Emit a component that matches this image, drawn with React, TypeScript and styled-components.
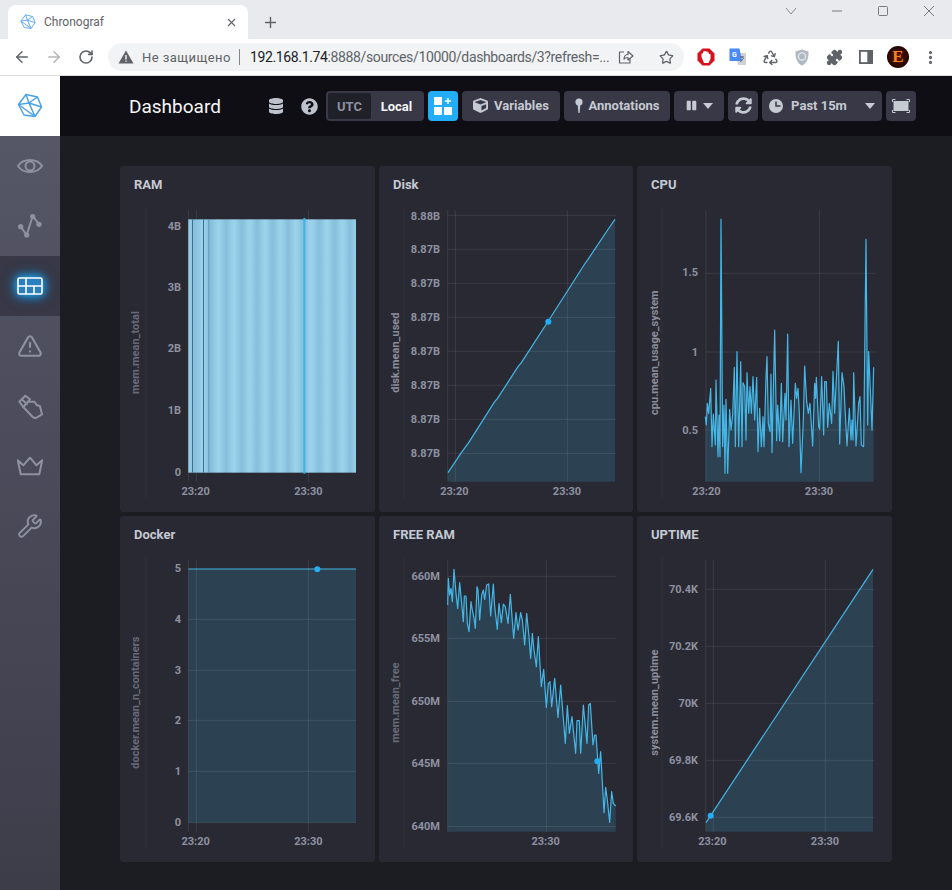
import React from 'react';
import styled, { createGlobalStyle } from 'styled-components';
import { ArrowLeft, ArrowRight, EllipsisVertical, Plus, Puzzle, Recycle, RotateCw, Star, TriangleAlert, Wrench, X } from 'lucide-react';
import { FaCube, FaDatabase, FaPause, FaQuestionCircle, FaSyncAlt } from 'react-icons/fa';

const GlobalStyle = createGlobalStyle`
  html, body { margin: 0; padding: 0; background: #1c1c23; }
  * { box-sizing: border-box; }
  body { font-family: Roboto, "Liberation Sans", sans-serif; }
`;

type Tick = { label: string; y: number };

interface ChartProps {
  id: string;
  title: string;
  yLabel: string;
  labelX: number;
  dim?: boolean;
  originX: number;
  left: number;
  right: number;
  top: number;
  bottom: number;
  anchor: number;
  hGrid: number[];
  vGrid: number[];
  yTicks: Tick[];
  xTicks: { label: string; x: number }[];
  series?: number[][];
  dot?: number[];
  children?: React.ReactNode;
}

// all chart coordinates are in 3x units, svg is scaled down to 255 wide
const cpuSeries = [
  [208, 770], [211, 795], [214, 730], [218, 760], [224, 685], [228, 860], [232, 762], [238, 855], [240, 660],
  [246, 890], [249, 765], [252, 890], [255, 178], [260, 860], [264, 735], [267, 940], [270, 718], [275, 940],
  [281, 748], [285, 810], [290, 765], [295, 622], [298, 860], [303, 575], [308, 860], [314, 605], [318, 860],
  [321, 668], [326, 680], [330, 840], [333, 638], [338, 760], [342, 680], [346, 760], [351, 650], [356, 780],
  [362, 652], [366, 875], [371, 745], [376, 860], [381, 770], [384, 860], [390, 650], [393, 590], [397, 790],
  [402, 815], [405, 642], [408, 878], [416, 510], [422, 842], [425, 735], [431, 842], [436, 670], [440, 845],
  [443, 782], [447, 700], [450, 780], [455, 522], [459, 860], [465, 720], [470, 850], [478, 670], [482, 715],
  [486, 685], [490, 760], [495, 938], [502, 780], [506, 618], [512, 725], [517, 760], [522, 730], [530, 858],
  [536, 670], [539, 715], [541, 652], [548, 800], [551, 808], [557, 650], [563, 825], [566, 665], [571, 665],
  [575, 802], [580, 730], [587, 790], [591, 634], [596, 760], [602, 640], [607, 544], [611, 852], [618, 638],
  [624, 680], [628, 765], [633, 858], [640, 745], [645, 840], [648, 780], [651, 840], [653, 638], [660, 858],
  [668, 730], [672, 710], [676, 855], [683, 860], [690, 238], [695, 795], [698, 575], [703, 690], [708, 810],
  [713, 622],
];

const freeRamSeries = [
  [209, 285], [211, 205], [215, 255], [219, 235], [223, 275], [228, 178], [234, 250], [239, 295], [245, 218],
  [251, 280], [256, 335], [259, 258], [264, 258], [268, 340], [273, 365], [279, 275], [283, 300], [288, 325],
  [292, 355], [297, 230], [300, 240], [305, 330], [311, 255], [316, 240], [320, 268], [326, 225], [332, 222],
  [338, 318], [346, 222], [350, 290], [358, 358], [363, 280], [370, 338], [376, 282], [382, 290], [390, 340],
  [397, 253], [407, 385], [414, 308], [420, 360], [428, 308], [433, 330], [440, 405], [446, 310], [453, 380],
  [458, 445], [463, 370], [468, 420], [475, 470], [481, 380], [490, 530], [497, 478], [505, 592], [511, 520],
  [516, 515], [521, 590], [530, 505], [540, 622], [548, 525], [562, 700], [568, 587], [574, 670], [582, 620],
  [593, 730], [597, 632], [604, 632], [608, 730], [616, 585], [627, 700], [632, 585], [637, 580], [645, 705],
  [650, 675], [654, 675], [662, 790], [668, 725], [678, 908], [683, 832], [688, 870], [695, 937], [701, 845],
  [706, 880], [713, 888],
];

const diskLabels = [166, 268, 370, 472, 574, 676, 778, 880];

const Chart = ({
  id, title, yLabel, labelX, dim, originX, left, right, top, bottom, anchor,
  hGrid, vGrid, yTicks, xTicks, series, dot, children,
}: ChartProps) => {
  const line = series?.map((p) => p.join(',')).join(' ');
  const first = series?.[0];
  const last = series?.[series.length - 1];
  return (
    <Card>
      <CardTitle>{title}</CardTitle>
      <ChartSvg viewBox={`${originX} 126 765 930`} aria-label={id}>
        <AxisBar x1={78} x2={78} y1={140} y2={1015} />
        {series && first && last && (
          <polygon points={`${first[0]},${bottom} ${line} ${last[0]},${bottom}`} fill="#2c4152" />
        )}
        {children}
        {hGrid.map((y) => (
          <GridLine key={y} x1={left} x2={right} y1={y} y2={y} />
        ))}
        {vGrid.map((x) => (
          <GridLine key={x} x1={x} x2={x} y1={top} y2={bottom} />
        ))}
        {series && <SeriesLine points={line} />}
        {dot && <circle cx={dot[0]} cy={dot[1]} r={9} fill="#22adf6" />}
        {yTicks.map((t) => (
          <AxisText key={t.y} x={anchor} y={t.y + 11} textAnchor="end">
            {t.label}
          </AxisText>
        ))}
        {xTicks.map((t) => (
          <AxisText key={t.x} x={t.x} y={1004} textAnchor="middle">
            {t.label}
          </AxisText>
        ))}
        <AxisTitle $dim={dim} transform={`translate(${labelX} 578) rotate(-90)`} textAnchor="middle">
          {yLabel}
        </AxisTitle>
      </ChartSvg>
    </Card>
  );
};

const SideIcon = ({ children }: { children: React.ReactNode }) => (
  <svg width="26" height="26" viewBox="0 0 26 26" fill="none" stroke="currentColor" strokeWidth="2" strokeLinejoin="round" strokeLinecap="round">
    {children}
  </svg>
);

const Logo = ({ size, stroke }: { size: number; stroke: string }) => (
  <svg width={size} height={size} viewBox="0 0 26 26" fill="none" stroke={stroke} strokeWidth="1.5" strokeLinejoin="round">
    <path d="M9 1.5 L20.5 4 L24.5 14 L18 23.5 L7 22 L1.5 11.5 Z" />
    <path d="M9 1.5 L12 10 L1.5 11.5 M12 10 L20.5 4 M12 10 L18 23.5 M1.5 11.5 L18 23.5 M24.5 14 L12 10" />
  </svg>
);

const App = () => (
  <>
    <GlobalStyle />
    <Window>
      <TabStrip>
        <Tab>
          <Logo size={16} stroke="#5aa7ee" />
          <TabTitle>Chronograf</TabTitle>
          <X size={13} color="#5f6368" strokeWidth={2} />
        </Tab>
        <NewTab>
          <Plus size={17} strokeWidth={2} />
        </NewTab>
        <WindowControls>
          <svg width="12" height="8" viewBox="0 0 12 8" fill="none" stroke="#8a8c90"><path d="M1 1 L6 7 L11 1" /></svg>
          <svg width="12" height="2" viewBox="0 0 12 2" stroke="#77797d"><path d="M1 1 H11" /></svg>
          <svg width="12" height="12" viewBox="0 0 12 12" fill="none" stroke="#77797d"><rect x="1.5" y="1.5" width="9" height="9" rx="1" /></svg>
          <svg width="12" height="12" viewBox="0 0 12 12" fill="none" stroke="#77797d"><path d="M1 1 L11 11 M11 1 L1 11" /></svg>
        </WindowControls>
      </TabStrip>

      <BrowserBar>
        <NavButton><ArrowLeft size={18} color="#5f6368" strokeWidth={2} /></NavButton>
        <NavButton><ArrowRight size={18} color="#b4b6b9" strokeWidth={2} /></NavButton>
        <NavButton><RotateCw size={16} color="#5f6368" strokeWidth={2.4} /></NavButton>
        <Omnibox>
          <TriangleFlag viewBox="0 0 16 14" width="16" height="14">
            <path d="M8 0.5 L15.5 13.5 H0.5 Z" fill="#5f6368" />
            <path d="M7.3 5 H8.7 V9.4 H7.3 Z M7.3 10.4 H8.7 V11.8 H7.3 Z" fill="#f1f3f4" />
          </TriangleFlag>
          <Insecure>Не защищено</Insecure>
          <OmniDivider />
          <Url>
            <b>192.168.1.74</b>:8888/sources/10000/dashboards/3?refresh=...
          </Url>
          <OmniIcons>
            <svg width="16" height="16" viewBox="0 0 16 16" fill="none" stroke="#5f6368" strokeWidth="1.2" strokeLinejoin="round">
              <path d="M6 3 H1.5 V14 H12 V10 M6 10 C6 7 8 5.5 10 5.5 V2.5 L15 7 L10 11 V8.5 C8.5 8.5 7 9 6 10 Z" />
            </svg>
            <Star size={15} color="#5f6368" strokeWidth={2} />
          </OmniIcons>
        </Omnibox>
        <Extensions>
          <ExtSlot>
            <svg width="18" height="18" viewBox="0 0 18 18">
              <path d="M5.5 0.5 H12.5 L17.5 5.5 V12.5 L12.5 17.5 H5.5 L0.5 12.5 V5.5 Z" fill="#d8101b" />
              <path d="M4.5 9 V5.5 H6 V3.5 H7.5 V3 H9 V3.5 H10.5 V4.5 H12 V6 H13.5 V11 L11.5 15 H7 Z" fill="#fff" />
            </svg>
          </ExtSlot>
          <ExtSlot>
            <svg width="18" height="18" viewBox="0 0 18 18">
              <path d="M7 5 H17 V17 H9 Z" fill="#cfd1d4" />
              <path d="M0.5 0.5 H10.5 L13 13 H0.5 Z" fill="#4a8af4" />
              <text x="3" y="9" fontSize="7" fontWeight="700" fill="#fff">G</text>
              <path d="M11 9 H15 M13 8 V10 M11.5 14 L14.5 10" stroke="#5f6368" fill="none" />
            </svg>
          </ExtSlot>
          <ExtSlot><Recycle size={17} color="#5f6368" strokeWidth={2} /></ExtSlot>
          <ExtSlot>
            <svg width="14" height="17" viewBox="0 0 14 17">
              <path d="M7 0.5 L13.5 2.5 C13.8 9 12 14 7 16.5 C2 14 0.2 9 0.5 2.5 Z" fill="#b0b8c2" />
              <circle cx="7" cy="7.5" r="3.6" fill="none" stroke="#e4e7ea" strokeWidth="1.4" />
            </svg>
          </ExtSlot>
          <ExtSlot><Puzzle size={17} color="#5f6368" fill="#5f6368" strokeWidth={1.6} /></ExtSlot>
          <ExtSlot>
            <svg width="14" height="14" viewBox="0 0 14 14">
              <rect x="0" y="0" width="14" height="14" fill="#5f6368" />
              <rect x="1.8" y="1.8" width="6.5" height="10.4" fill="#fff" />
            </svg>
          </ExtSlot>
          <ExtSlot><Avatar>E</Avatar></ExtSlot>
          <ExtSlot><EllipsisVertical size={17} color="#5f6368" strokeWidth={2.6} /></ExtSlot>
        </Extensions>
      </BrowserBar>

      <AppBody>
        <Sidebar>
          <LogoCell><Logo size={26} stroke="#4aa3ea" /></LogoCell>
          <NavItem>
            <SideIcon>
              <path d="M1 13 C6 5 20 5 25 13 C20 21 6 21 1 13 Z" />
              <circle cx="13" cy="13" r="4.5" />
            </SideIcon>
          </NavItem>
          <NavItem>
            <SideIcon>
              <path d="M3.7 13.7 L9.7 22 L15.7 3 L22 11.3" />
              <g fill="currentColor" stroke="none">
                <circle cx="3.7" cy="13.7" r="2.6" />
                <circle cx="9.7" cy="22" r="2.6" />
                <circle cx="15.7" cy="3.5" r="2.6" />
                <circle cx="22" cy="11.3" r="2.6" />
              </g>
            </SideIcon>
          </NavItem>
          <NavItem $active>
            <svg width="26" height="18" viewBox="0 0 26 18">
              <rect x="1" y="1" width="24" height="16" rx="1.5" fill="#2a7fc0" stroke="#fff" strokeWidth="1.6" />
              <path d="M1 9 H25 M9 1 V17 M17 9 V17" stroke="#fff" strokeWidth="1.6" fill="none" />
            </svg>
          </NavItem>
          <NavItem><TriangleAlert size={26} strokeWidth={2} /></NavItem>
          <NavItem>
            <SideIcon>
              <path d="M2.3 8.7 L8.3 2.7 L13 6.3 L6.3 14 Z" />
              <path d="M11.3 8.7 L17.3 8.7 L19.7 12 L23 13.3 L25 21.3 L18.3 25.3 L15.7 24 L6.3 14" />
              <path d="M5.5 7 L10 11" />
            </SideIcon>
          </NavItem>
          <NavItem>
            <SideIcon>
              <path d="M0.8 7.3 L6.3 12.3 L13 4.7 L19.5 12.3 L25.2 7.3 L22.3 21.3 H3.7 Z" />
            </SideIcon>
          </NavItem>
          <NavItem><Wrench size={26} strokeWidth={1.8} /></NavItem>
        </Sidebar>

        <Main>
          <TopBar>
            <PageTitle>Dashboard</PageTitle>
            <Tools>
              <PlainIcon $right={13}><FaDatabase size={16} /></PlainIcon>
              <PlainIcon $right={4}><FaQuestionCircle size={17} /></PlainIcon>
              <TimeToggle>
                <ToggleOption>UTC</ToggleOption>
                <ToggleOption $active>Local</ToggleOption>
              </TimeToggle>
              <AddCell>
                <svg width="18" height="18" viewBox="0 0 18 18" fill="#fff">
                  <rect x="0" y="0" width="8" height="8" />
                  <rect x="0" y="10" width="8" height="8" />
                  <rect x="10" y="10" width="8" height="8" />
                  <path d="M13.3 1 H14.7 V3.3 H17 V4.7 H14.7 V7 H13.3 V4.7 H11 V3.3 H13.3 Z" />
                </svg>
              </AddCell>
              <ToolButton $width={98}><FaCube size={15} />Variables</ToolButton>
              <ToolButton $width={106}>
                <svg width="8" height="16" viewBox="0 0 8 16" fill="currentColor">
                  <circle cx="4" cy="4" r="3.6" />
                  <path d="M2.6 6 H5.4 L4.6 15 H3.4 Z" />
                </svg>
                Annotations
              </ToolButton>
              <ToolButton $width={50}><FaPause size={11} /><Caret /></ToolButton>
              <ToolButton $width={30}><FaSyncAlt size={17} /></ToolButton>
              <ToolButton $width={120}>
                <svg width="14" height="14" viewBox="0 0 14 14">
                  <circle cx="7" cy="7" r="7" fill="currentColor" />
                  <path d="M7 2.5 V7 H11.5" stroke="#383846" strokeWidth="1.5" fill="none" />
                </svg>
                <TimeLabel>Past 15m</TimeLabel>
                <Caret />
              </ToolButton>
              <ToolButton $width={30}>
                <svg width="18" height="14" viewBox="0 0 18 14" fill="none" stroke="currentColor" strokeWidth="1">
                  <rect x="2" y="2.5" width="14" height="9" fill="currentColor" />
                  <path d="M0.5 3 V0.5 H3.5 M14.5 0.5 H17.5 V3 M17.5 11 V13.5 H14.5 M3.5 13.5 H0.5 V11" />
                </svg>
              </ToolButton>
            </Tools>
          </TopBar>

          <Page>
            <Grid>
              <Chart
                id="ram" title="RAM" yLabel="mem.mean_total" labelX={58} dim originX={0}
                left={205} right={708} top={150} bottom={965} anchor={183}
                hGrid={[]} vGrid={[205, 229, 565]}
                yTicks={[{ label: '4B', y: 198 }, { label: '3B', y: 382 }, { label: '2B', y: 566 }, { label: '1B', y: 750 }, { label: '0', y: 936 }]}
                xTicks={[{ label: '23:20', x: 227 }, { label: '23:30', x: 565 }]}
              >
                <defs>
                  <linearGradient id="ramBand">
                    <stop offset="0" stopColor="#86bedb" />
                    <stop offset="0.5" stopColor="#9dd4ec" />
                    <stop offset="1" stopColor="#86bedb" />
                  </linearGradient>
                  <pattern id="ramStripes" x="272" y="0" width="46.5" height="10" patternUnits="userSpaceOnUse">
                    <rect width="46.5" height="10" fill="url(#ramBand)" />
                  </pattern>
                </defs>
                <rect x={205} y={178} width={503} height={760} fill="url(#ramStripes)" />
                <RamMark x={216} y={178} width={3} height={760} fill="#3c6f8f" />
                <RamMark x={249} y={178} width={3} height={760} fill="#3c6f8f" />
                <RamMark x={265} y={178} width={3} height={760} fill="#5f95b4" />
                <RamMark x={550} y={174} width={6} height={767} fill="#3cb2ea" />
              </Chart>
              <Chart
                id="disk" title="Disk" yLabel="disk.mean_used" labelX={62} originX={3}
                left={209} right={714} top={150} bottom={965} anchor={186}
                hGrid={diskLabels} vGrid={[209, 232, 568]}
                yTicks={diskLabels.map((y, i) => ({ label: i === 0 ? '8.88B' : '8.87B', y: i === 0 ? y + 3 : y }))}
                xTicks={[{ label: '23:20', x: 229 }, { label: '23:30', x: 567 }]}
                series={[[210, 938], [250, 878], [272, 848], [350, 725], [358, 716], [420, 620], [430, 608], [511, 483], [620, 312], [630, 298], [695, 201], [711, 178]]}
                dot={[511, 485]}
              />
              <Chart
                id="cpu" title="CPU" yLabel="cpu.mean_usage_system" labelX={65} originX={3}
                left={209} right={718} top={150} bottom={965} anchor={186}
                hGrid={[340, 576, 810]} vGrid={[210, 550]}
                yTicks={[{ label: '1.5', y: 338 }, { label: '1', y: 576 }, { label: '0.5', y: 810 }]}
                xTicks={[{ label: '23:20', x: 211 }, { label: '23:30', x: 549 }]}
                series={cpuSeries}
              />
              <Chart
                id="docker" title="Docker" yLabel="docker.mean_n_containers" labelX={58} dim originX={0}
                left={205} right={708} top={150} bottom={965} anchor={183}
                hGrid={[328, 481, 631, 784, 938]} vGrid={[205, 229, 565]}
                yTicks={[{ label: '5', y: 175 }, { label: '4', y: 328 }, { label: '3', y: 481 }, { label: '2', y: 631 }, { label: '1', y: 784 }, { label: '0', y: 936 }]}
                xTicks={[{ label: '23:20', x: 227 }, { label: '23:30', x: 565 }]}
              >
                <rect x={205} y={178} width={503} height={760} fill="#2c4152" />
                <SeriesLine points="205,177 708,177" />
                <circle cx={592} cy={178} r={9} fill="#22adf6" />
              </Chart>
              <Chart
                id="free-ram" title="FREE RAM" yLabel="mem.mean_free" labelX={62} dim originX={3}
                left={209} right={714} top={150} bottom={965} anchor={186}
                hGrid={[199, 385, 574, 760, 949]} vGrid={[209, 505]}
                yTicks={[{ label: '660M', y: 199 }, { label: '655M', y: 385 }, { label: '650M', y: 574 }, { label: '645M', y: 760 }, { label: '640M', y: 948 }]}
                xTicks={[{ label: '23:30', x: 503 }]}
                series={freeRamSeries}
                dot={[658, 754]}
              />
              <Chart
                id="uptime" title="UPTIME" yLabel="system.mean_uptime" labelX={65} originX={3}
                left={209} right={714} top={150} bottom={965} anchor={186}
                hGrid={[238, 409, 580, 751, 922]} vGrid={[209, 232, 568]}
                yTicks={[{ label: '70.4K', y: 238 }, { label: '70.2K', y: 409 }, { label: '70K', y: 580 }, { label: '69.8K', y: 751 }, { label: '69.6K', y: 922 }]}
                xTicks={[{ label: '23:20', x: 229 }, { label: '23:30', x: 567 }]}
                series={[[210, 938], [711, 178]]}
                dot={[224, 917]}
              />
            </Grid>
          </Page>
        </Main>
      </AppBody>
    </Window>
  </>
);

const Window = styled.div`
  width: 952px;
  height: 890px;
  overflow: hidden;
  display: flex;
  flex-direction: column;
`;

const TabStrip = styled.div`
  height: 39px;
  background: #e8eaed;
  display: flex;
  align-items: flex-end;
  padding-left: 8px;
`;

const Tab = styled.div`
  width: 240px;
  height: 34px;
  background: #fff;
  border-radius: 8px 8px 0 0;
  display: flex;
  align-items: center;
  padding: 0 10px 0 12px;
`;

const TabTitle = styled.span`
  flex: 1;
  margin-left: 8px;
  font-size: 12px;
  color: #5f6368;
`;

const NewTab = styled.div`
  width: 44px;
  height: 34px;
  display: flex;
  align-items: center;
  justify-content: center;
  color: #5f6368;
`;

const WindowControls = styled.div`
  margin-left: auto;
  align-self: flex-start;
  width: 184px;
  height: 22px;
  display: grid;
  grid-template-columns: repeat(4, 46px);
  justify-items: center;
  align-items: center;
`;

const BrowserBar = styled.div`
  height: 37px;
  background: #fff;
  border-bottom: 1px solid #dadce0;
  display: flex;
  align-items: center;
  padding-left: 6px;
`;

const NavButton = styled.div`
  width: 32px;
  height: 28px;
  display: flex;
  align-items: center;
  justify-content: center;
`;

const Omnibox = styled.div`
  width: 576px;
  height: 28px;
  margin-left: 6px;
  border-radius: 14px;
  background: #f1f3f4;
  display: flex;
  align-items: center;
  padding-left: 10px;
`;

const TriangleFlag = styled.svg`
  flex: none;
`;

const Insecure = styled.span`
  margin-left: 8px;
  font-size: 13px;
  letter-spacing: 0.45px;
  color: #5f6368;
  white-space: nowrap;
`;

const OmniDivider = styled.span`
  width: 1px;
  height: 16px;
  margin: 0 10px 0 8px;
  background: #80868b;
`;

const Url = styled.span`
  font-size: 14px;
  letter-spacing: -0.36px;
  color: #5f6368;
  white-space: nowrap;
  b {
    font-weight: 400;
    color: #202124;
  }
`;

const OmniIcons = styled.div`
  margin-left: auto;
  width: 66px;
  padding-right: 10px;
  display: flex;
  align-items: center;
  justify-content: space-between;
`;

const Extensions = styled.div`
  margin-left: 6px;
  display: grid;
  grid-template-columns: repeat(8, 32px);
`;

const ExtSlot = styled.div`
  height: 28px;
  display: flex;
  align-items: center;
  justify-content: center;
`;

const Avatar = styled.div`
  width: 22px;
  height: 22px;
  border-radius: 50%;
  background: radial-gradient(circle, #5a1500 0%, #1d0500 75%);
  color: #f5821f;
  font: 700 17px/22px "Liberation Serif", serif;
  text-align: center;
`;

const AppBody = styled.div`
  flex: 1;
  display: flex;
  min-height: 0;
`;

const Sidebar = styled.nav`
  width: 60px;
  flex: none;
  display: flex;
  flex-direction: column;
  background: linear-gradient(180deg, #555666 8%, #3d3d4a 100%);
`;

const LogoCell = styled.div`
  height: 60px;
  background: #fff;
  display: flex;
  align-items: center;
  justify-content: center;
`;

const NavItem = styled.div<{ $active?: boolean }>`
  height: 60px;
  display: flex;
  align-items: center;
  justify-content: center;
  color: #8e91a1;
  background: ${({ $active }) => ($active ? '#383846' : 'transparent')};
  svg {
    filter: ${({ $active }) => ($active ? 'drop-shadow(0 0 4px #22adf6) drop-shadow(0 0 6px #0f7fc8)' : 'none')};
  }
`;

const Main = styled.main`
  flex: 1;
  min-width: 0;
  display: flex;
  flex-direction: column;
`;

const TopBar = styled.header`
  height: 60px;
  background: #0f0e15;
  display: flex;
  align-items: center;
  padding: 0 36px 0 69px;
`;

const PageTitle = styled.h1`
  margin: 0;
  font-size: 19px;
  font-weight: 400;
  color: #f6f6f8;
`;

const Tools = styled.div`
  margin-left: auto;
  display: flex;
  align-items: center;
  gap: 4px;
`;

const PlainIcon = styled.span<{ $right: number }>`
  display: flex;
  margin-right: ${({ $right }) => $right}px;
  color: #bec2cc;
`;

const TimeToggle = styled.div`
  width: 98px;
  height: 30px;
  padding: 2px;
  border-radius: 4px;
  background: #383846;
  display: grid;
  grid-template-columns: 43px 1fr;
`;

const ToggleOption = styled.div<{ $active?: boolean }>`
  display: flex;
  align-items: center;
  justify-content: center;
  font-size: 13px;
  font-weight: 700;
  border-radius: 2px;
  color: ${({ $active }) => ($active ? '#f6f6f8' : '#8e91a1')};
  background: ${({ $active }) => ($active ? '#383846' : '#202028')};
`;

const AddCell = styled.button`
  width: 30px;
  height: 30px;
  padding: 0;
  border: 0;
  border-radius: 4px;
  background: #22adf6;
  display: flex;
  align-items: center;
  justify-content: center;
`;

const ToolButton = styled.button<{ $width: number }>`
  width: ${({ $width }) => $width}px;
  height: 30px;
  padding: 0 0 1px;
  border: 0;
  border-radius: 4px;
  background: #383846;
  color: #c6cad3;
  font: 700 13px Roboto, sans-serif;
  display: flex;
  align-items: center;
  justify-content: center;
  gap: 6px;
`;

const TimeLabel = styled.span`
  margin: 0 12px 0 2px;
`;

const Caret = styled.span`
  width: 0;
  height: 0;
  border-left: 5.5px solid transparent;
  border-right: 5.5px solid transparent;
  border-top: 6px solid currentColor;
`;

const Page = styled.div`
  flex: 1;
  padding: 30px 60px 0;
  background: #1c1c23;
`;

const Grid = styled.div`
  display: grid;
  grid-template-columns: 255px 254px 255px;
  grid-auto-rows: 346px;
  gap: 4px;
`;

const Card = styled.section`
  border-radius: 3px;
  background: #292933;
  overflow: hidden;
`;

const CardTitle = styled.h2`
  margin: 0;
  height: 36px;
  padding: 12px 0 0 14px;
  font-size: 13px;
  line-height: 14px;
  font-weight: 700;
  color: #c6cad3;
`;

const ChartSvg = styled.svg`
  display: block;
  width: 255px;
  height: 310px;
`;

const AxisBar = styled.line`
  stroke: #31313d;
  stroke-width: 3;
`;

const GridLine = styled.line`
  stroke: rgba(255, 255, 255, 0.09);
  stroke-width: 3;
`;

const SeriesLine = styled.polyline`
  fill: none;
  stroke: #45b7e6;
  stroke-width: 3.6;
  stroke-linejoin: round;
`;

const RamMark = styled.rect``;

const AxisText = styled.text`
  font-family: Roboto, "Liberation Sans", sans-serif;
  font-size: 33px;
  font-weight: 700;
  fill: #8e91a1;
`;

const AxisTitle = styled.text<{ $dim?: boolean }>`
  font-family: Roboto, "Liberation Sans", sans-serif;
  font-size: 33px;
  font-weight: 700;
  fill: ${({ $dim }) => ($dim ? '#676978' : '#8a8d9c')};
`;

export default App;
